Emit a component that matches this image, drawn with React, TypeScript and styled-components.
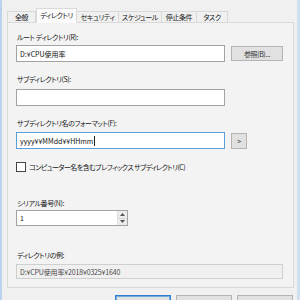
import React from "react";
import styled, { createGlobalStyle } from "styled-components";

const GlobalStyle = createGlobalStyle`
  html, body {
    margin: 0;
    padding: 0;
    background: #f0f0f0;
  }
  body {
    font-family: "Noto Sans CJK JP", "Noto Sans", sans-serif;
    font-feature-settings: "palt";
    font-size: 7px;
    letter-spacing: -0.4px;
    color: #161616;
  }
`;

const Window = styled.div`
  width: 300px;
  height: 300px;
  box-sizing: border-box;
  overflow: hidden;
  background: #f0f0f0;
  border-left: 2px solid #b8d3ee;
  border-right: 3px solid #cfe0f2;
  padding: 9px 3px 0 5px;
`;

const TabStrip = styled.div`
  display: flex;
  align-items: flex-end;
  height: 14px;
  margin-bottom: -1px;
  position: relative;
  z-index: 1;
`;

const Tab = styled.div<{ $active?: boolean; $w: number }>`
  box-sizing: border-box;
  width: ${(p) => p.$w}px;
  height: ${(p) => (p.$active ? 15 : 12)}px;
  display: flex;
  align-items: center;
  justify-content: center;
  border: 1px solid #d9d9d9;
  border-left-width: ${(p) => (p.$active ? 1 : 0)}px;
  border-bottom-color: ${(p) => (p.$active ? "#fbfbfb" : "#d9d9d9")};
  background: ${(p) => (p.$active ? "#fbfbfb" : "#f0f0f0")};
  padding-bottom: ${(p) => (p.$active ? 2 : 0)}px;
  white-space: nowrap;
  &:first-child {
    border-left-width: 1px;
  }
`;

const Panel = styled.div`
  box-sizing: border-box;
  width: 287px;
  height: 266px;
  border: 1px solid #d9d9d9;
  background: #f3f3f3;
  padding: 8px 8px 0 8px;
  display: flex;
  flex-direction: column;
`;

const Label = styled.div<{ $top: number }>`
  height: 12px;
  line-height: 12px;
  margin-top: ${(p) => p.$top}px;
  padding-left: 1px;
  white-space: nowrap;
`;

const Row = styled.div<{ $top: number }>`
  display: flex;
  align-items: center;
  gap: 6px;
  margin-top: ${(p) => p.$top}px;
`;

const TextBox = styled.div<{ $w: number; $h: number; $focus?: boolean }>`
  box-sizing: border-box;
  width: ${(p) => p.$w}px;
  height: ${(p) => p.$h}px;
  background: #ffffff;
  border: 1px solid ${(p) => (p.$focus ? "#5b9fd8" : "#a3a3a3")};
  padding-left: 3px;
  display: flex;
  align-items: center;
  white-space: nowrap;
  letter-spacing: 0;
  color: #111;
`;

const Caret = styled.span`
  display: inline-block;
  width: 1px;
  height: 10px;
  background: #222;
  margin-left: 1px;
`;

const Button = styled.div<{ $w: number; $h: number }>`
  box-sizing: border-box;
  width: ${(p) => p.$w}px;
  height: ${(p) => p.$h}px;
  background: #e1e1e1;
  border: 1px solid #b4b4b4;
  display: flex;
  align-items: center;
  justify-content: center;
  white-space: nowrap;
  color: #333;
`;

const CheckRow = styled.div`
  display: flex;
  align-items: center;
  gap: 3px;
  height: 12px;
  margin-top: 12px;
  white-space: nowrap;
  letter-spacing: -0.55px;
`;

const CheckBox = styled.div`
  box-sizing: border-box;
  width: 10px;
  height: 10px;
  border: 1px solid #444;
  background: #fff;
`;

const Spin = styled.div`
  box-sizing: border-box;
  width: 112px;
  height: 16px;
  margin-top: 1px;
  background: #fff;
  border: 1px solid #a3a3a3;
  display: flex;
`;

const SpinValue = styled.div`
  flex: 1;
  padding-left: 3px;
  display: flex;
  align-items: center;
`;

const SpinButtons = styled.div`
  width: 9px;
  display: flex;
  flex-direction: column;
  border-left: 1px solid #e0e0e0;
`;

const SpinArrow = styled.div`
  flex: 1;
  background: #ececec;
  display: flex;
  align-items: center;
  justify-content: center;
  &:first-child {
    border-bottom: 1px solid #d6d6d6;
  }
`;

const ReadOnlyBox = styled.div`
  box-sizing: border-box;
  width: 267px;
  height: 15px;
  margin-top: 3px;
  background: #f0f0f0;
  border: 1px solid #cfcfcf;
  padding-left: 3px;
  display: flex;
  align-items: center;
  white-space: nowrap;
  letter-spacing: -0.15px;
  color: #4a4a4a;
`;

const Footer = styled.div`
  display: flex;
  justify-content: flex-end;
  gap: 5px;
  margin-top: 7px;
  padding-right: 1px;
`;

const DialogButton = styled.div<{ $default?: boolean }>`
  box-sizing: border-box;
  width: 56px;
  height: 22px;
  padding-top: 3px;
  background: #e1e1e1;
  border: 1px solid ${(p) => (p.$default ? "#2f7fcf" : "#b4b4b4")};
  box-shadow: ${(p) => (p.$default ? "inset 0 0 0 1px #74a9de" : "none")};
  display: flex;
  align-items: flex-start;
  justify-content: center;
  color: #333;
`;

const Arrow = ({ up }: { up?: boolean }) => (
  <svg width="5" height="3" viewBox="0 0 5 3">
    <path d={up ? "M0 3 L2.5 0 L5 3 Z" : "M0 0 L2.5 3 L5 0 Z"} fill="#555" />
  </svg>
);

const tabs: { name: string; w: number }[] = [
  { name: "全般", w: 29 },
  { name: "ディレクトリ", w: 41 },
  { name: "セキュリティ", w: 42 },
  { name: "スケジュール", w: 43 },
  { name: "停止条件", w: 35 },
  { name: "タスク", w: 31 },
];

export default function App() {
  return (
    <>
      <GlobalStyle />
      <Window>
        <TabStrip>
          {tabs.map((t, i) => (
            <Tab key={t.name} $w={t.w} $active={i === 1}>
              {t.name}
            </Tab>
          ))}
        </TabStrip>
        <Panel>
          <Label $top={0}>ルート ディレクトリ(R):</Label>
          <Row $top={2}>
            <TextBox $w={209} $h={17}>D:¥CPU使用率</TextBox>
            <Button $w={52} $h={15}>参照(B)...</Button>
          </Row>

          <Label $top={11}>サブディレクトリ(S):</Label>
          <Row $top={4}>
            <TextBox $w={209} $h={17} />
          </Row>

          <Label $top={11}>サブディレクトリ名のフォーマット(F):</Label>
          <Row $top={3}>
            <TextBox $w={209} $h={17} $focus>
              yyyy¥¥MMdd¥¥HHmm
              <Caret />
            </TextBox>
            <Button $w={16} $h={16}>&gt;</Button>
          </Row>

          <CheckRow>
            <CheckBox />
            コンピューター名を含むプレフィックス サブディレクトリ(C)
          </CheckRow>

          <Label $top={24}>シリアル番号(N):</Label>
          <Spin>
            <SpinValue>1</SpinValue>
            <SpinButtons>
              <SpinArrow>
                <Arrow up />
              </SpinArrow>
              <SpinArrow>
                <Arrow />
              </SpinArrow>
            </SpinButtons>
          </Spin>

          <Label $top={23}>ディレクトリの例:</Label>
          <ReadOnlyBox>D:¥CPU使用率¥2018¥0325¥1640</ReadOnlyBox>
        </Panel>
        <Footer>
          <DialogButton $default>OK</DialogButton>
          <DialogButton>キャンセル</DialogButton>
          <DialogButton>適用(A)</DialogButton>
        </Footer>
      </Window>
    </>
  );
}
